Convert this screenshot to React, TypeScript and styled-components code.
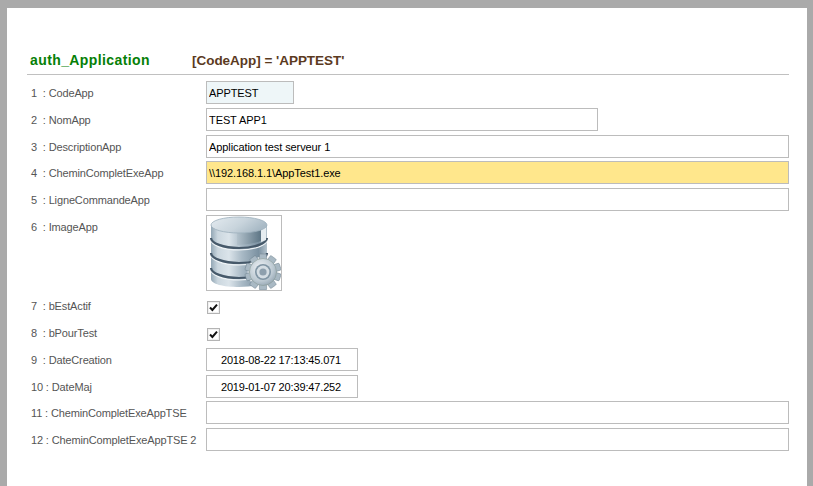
import styled, { createGlobalStyle } from "styled-components";

const GlobalStyle = createGlobalStyle`
  html, body {
    margin: 0;
    padding: 0;
    background: #aaaaaa;
    font-family: "Liberation Sans", Arial, sans-serif;
  }
`;

const Sheet = styled.div`
  box-sizing: border-box;
  height: 478px;
  margin: 8px 6px 0 7px;
  padding: 41px 18px 0 20px;
  background: #ffffff;
  overflow: hidden;
`;

const TitleBar = styled.div`
  display: flex;
  align-items: center;
  height: 22px;
  padding-bottom: 3px;
  border-bottom: 1px solid #c0c0c0;
`;

const TableName = styled.div`
  width: 165px;
  padding-left: 3px;
  box-sizing: border-box;
  font-size: 14px;
  font-weight: bold;
  letter-spacing: 0.4px;
  color: #068006;
`;

const RecordKey = styled.div`
  font-size: 13.5px;
  font-weight: bold;
  letter-spacing: -0.03px;
  color: #5b3a1e;
`;

const Rows = styled.div`
  display: flex;
  flex-direction: column;
  gap: 3.72px;
  margin-top: 6.1px;
`;

const Row = styled.div`
  display: flex;
  align-items: flex-start;
  min-height: 23px;
`;

const Label = styled.div`
  box-sizing: border-box;
  flex: 0 0 179px;
  height: 23px;
  padding-left: 4px;
  line-height: 24px;
  font-size: 11px;
  letter-spacing: -0.14px;
  color: #555555;
  white-space: pre;
`;

const Field = styled.input<{ $width?: number; $bg?: string; $center?: boolean }>`
  box-sizing: border-box;
  display: block;
  width: ${({ $width }) => ($width ? `${$width}px` : "100%")};
  height: 23px;
  margin: 0;
  padding: 1px ${({ $center }) => ($center ? "4px" : "2px")} 0 2px;
  border: 1px solid #bcbcbc;
  border-radius: 0;
  outline: none;
  background: ${({ $bg }) => $bg || "#ffffff"};
  font-family: "Liberation Sans", Arial, sans-serif;
  font-size: 11px;
  letter-spacing: ${({ $center }) => ($center ? "-0.15px" : "-0.09px")};
  color: #000000;
  text-align: ${({ $center }) => ($center ? "center" : "left")};
`;

const ImageFrame = styled.div`
  box-sizing: border-box;
  width: 76px;
  height: 76px;
  border: 1px solid #bcbcbc;
  background: #ffffff;
`;

const CheckCell = styled.div`
  display: flex;
  align-items: center;
  height: 23px;
  padding: 3px 0 0 1px;
  box-sizing: border-box;
`;

const CheckBox = styled.span`
  box-sizing: border-box;
  display: flex;
  align-items: center;
  justify-content: center;
  width: 13px;
  height: 13px;
  border: 1px solid #b4b4b4;
  box-shadow: inset 0 0 0 1px #f0f0f0;
  background: #ffffff;
`;

function CheckMark() {
  return (
    <svg width="9" height="9" viewBox="0 0 9 9">
      <path d="M1 4.5 L3.4 7 L8 1.6" fill="none" stroke="#111111" strokeWidth="2" />
    </svg>
  );
}

function DatabaseGear() {
  const teeth = Array.from({ length: 10 }, (_, i) => i * 36);
  const bands = [22, 37, 52];
  return (
    <svg width="74" height="74" viewBox="0 0 74 74" style={{ display: "block" }}>
      <defs>
        <linearGradient id="drum" x1="0" x2="1" y1="0" y2="0">
          <stop offset="0" stopColor="#93a7b5" />
          <stop offset="0.12" stopColor="#cbd7df" />
          <stop offset="0.32" stopColor="#dbe4ea" />
          <stop offset="0.55" stopColor="#a9bac6" />
          <stop offset="0.85" stopColor="#7b91a1" />
          <stop offset="1" stopColor="#b4c3cd" />
        </linearGradient>
        <linearGradient id="lid" x1="0" x2="1" y1="0" y2="0.4">
          <stop offset="0" stopColor="#e4ebf0" />
          <stop offset="0.6" stopColor="#c8d4dc" />
          <stop offset="1" stopColor="#a9bac6" />
        </linearGradient>
        <linearGradient id="glare" x1="0" x2="1" y1="0" y2="0">
          <stop offset="0" stopColor="#b3c2cc" />
          <stop offset="1" stopColor="#5d7585" />
        </linearGradient>
        <radialGradient id="cog" cx="0.4" cy="0.35" r="0.8">
          <stop offset="0" stopColor="#eef2f5" />
          <stop offset="0.6" stopColor="#bcc9d2" />
          <stop offset="1" stopColor="#8496a5" />
        </radialGradient>
      </defs>
      <path d="M4 9 V63 C4 68 16 71 32 71 C48 71 60 68 60 63 V9 Z" fill="url(#drum)" />
      {bands.map((y) => (
        <g key={y} fill="none">
          <path d={`M4 ${y + 2} C4 ${y + 7} 16 ${y + 12} 32 ${y + 12} C48 ${y + 12} 60 ${y + 7} 60 ${y + 2}`} stroke="#eef3f6" strokeWidth="1.2" />
          <path d={`M4 ${y} C4 ${y + 5} 16 ${y + 10} 32 ${y + 10} C48 ${y + 10} 60 ${y + 5} 60 ${y}`} stroke="#46596a" strokeWidth="2.2" />
        </g>
      ))}
      <path d="M30 16 C38 16 48 15 54 13 V25 C48 27 38 29 30 29 Z" fill="url(#glare)" />
      <path d="M54 13 L59 11 V24 L54 26 Z" fill="#e6edf1" />
      <ellipse cx="32" cy="9" rx="28" ry="8" fill="url(#lid)" stroke="#9db0bd" strokeWidth="0.8" />
      <g transform="translate(56 56)">
        <circle r="15.5" fill="#ffffff" opacity="0.8" />
        {teeth.map((a) => (
          <rect key={a} x="-3.6" y="-18" width="7.2" height="8" rx="1" fill="#a9b9c4" stroke="#70838f" strokeWidth="0.5" transform={`rotate(${a})`} />
        ))}
        <circle r="13.5" fill="url(#cog)" stroke="#84978f" strokeWidth="0.5" />
        <circle r="8" fill="#7f94a3" />
        <circle r="6.4" fill="#d4dde3" />
        <circle r="3.6" fill="#8d9fad" />
      </g>
    </svg>
  );
}

const BLUE_TINT = "#eef6f8";
const YELLOW = "#ffe78c";

export default function App() {
  return (
    <>
      <GlobalStyle />
      <Sheet>
        <TitleBar>
          <TableName>auth_Application</TableName>
          <RecordKey>[CodeApp] = 'APPTEST'</RecordKey>
        </TitleBar>
        <Rows>
          <Row>
            <Label>{"1  : CodeApp"}</Label>
            <Field readOnly value="APPTEST" $width={88} $bg={BLUE_TINT} />
          </Row>
          <Row>
            <Label>{"2  : NomApp"}</Label>
            <Field readOnly value="TEST APP1" $width={392} />
          </Row>
          <Row>
            <Label>{"3  : DescriptionApp"}</Label>
            <Field readOnly value="Application test serveur 1" />
          </Row>
          <Row>
            <Label>{"4  : CheminCompletExeApp"}</Label>
            <Field readOnly value="\\192.168.1.1\AppTest1.exe" $bg={YELLOW} />
          </Row>
          <Row>
            <Label>{"5  : LigneCommandeApp"}</Label>
            <Field readOnly value="" />
          </Row>
          <Row>
            <Label>{"6  : ImageApp"}</Label>
            <ImageFrame>
              <DatabaseGear />
            </ImageFrame>
          </Row>
          <Row>
            <Label>{"7  : bEstActif"}</Label>
            <CheckCell>
              <CheckBox>
                <CheckMark />
              </CheckBox>
            </CheckCell>
          </Row>
          <Row>
            <Label>{"8  : bPourTest"}</Label>
            <CheckCell>
              <CheckBox>
                <CheckMark />
              </CheckBox>
            </CheckCell>
          </Row>
          <Row>
            <Label>{"9  : DateCreation"}</Label>
            <Field readOnly value="2018-08-22 17:13:45.071" $width={152} $center />
          </Row>
          <Row>
            <Label>{"10 : DateMaj"}</Label>
            <Field readOnly value="2019-01-07 20:39:47.252" $width={152} $center />
          </Row>
          <Row>
            <Label>{"11 : CheminCompletExeAppTSE"}</Label>
            <Field readOnly value="" />
          </Row>
          <Row>
            <Label>{"12 : CheminCompletExeAppTSE 2"}</Label>
            <Field readOnly value="" />
          </Row>
        </Rows>
      </Sheet>
    </>
  );
}
